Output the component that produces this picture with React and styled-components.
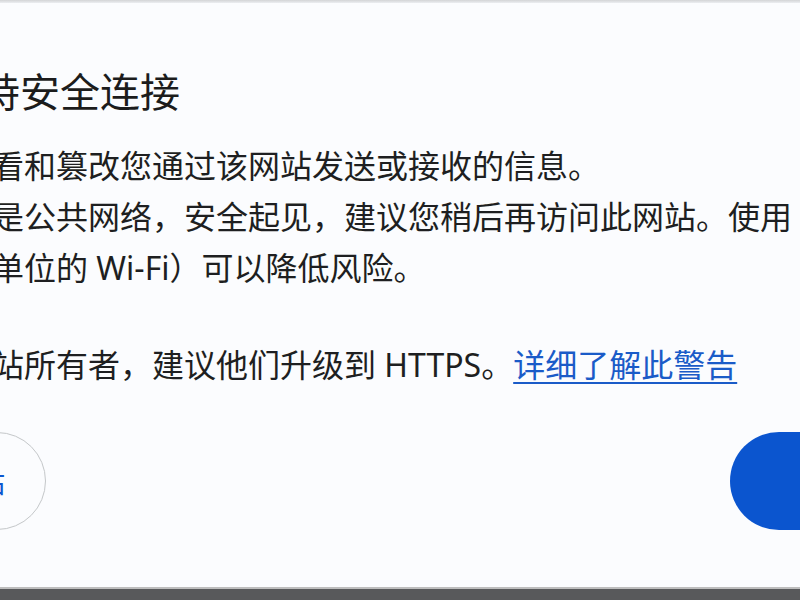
import React from "react";
import styled, { createGlobalStyle } from "styled-components";

const GlobalStyle = createGlobalStyle`
  html, body {
    margin: 0;
    padding: 0;
    background: #fbfcfe;
    overflow: hidden;
  }
  * { box-sizing: border-box; }
`;

const Screen = styled.div`
  width: 800px;
  height: 600px;
  display: flex;
  flex-direction: column;
  overflow: hidden;
  background: #fbfcfe;
  font-family: "Noto Sans", "Noto Sans CJK SC", sans-serif;
  color: #1e1f21;
`;

const TopEdge = styled.div`
  flex: 0 0 3px;
  background: linear-gradient(#d3d4d6, #eceef1);
`;

const Main = styled.main`
  flex: 1;
  min-height: 0;
  overflow: hidden;
  padding-top: 62px;
`;

const Column = styled.div`
  width: 1130px;
  margin-left: -200px;
`;

const Heading = styled.h1`
  margin: 0 0 25px -20px;
  font-family: "Noto Sans CJK SC", sans-serif;
  font-size: 40px;
  line-height: 50px;
  font-weight: 400;
  white-space: nowrap;
  color: #1c1c1c;
`;

const Para = styled.p`
  margin: 0 0 ${(p) => p.$after || 0}px;
  font-size: 32px;
  line-height: 51px;
`;

const Line = styled.span`
  display: block;
  white-space: nowrap;
`;

const Link = styled.a`
  color: #1a5bc8;
  text-decoration: underline;
  text-decoration-thickness: 1.5px;
  text-underline-offset: 5px;
  cursor: pointer;
`;

const ButtonRow = styled.div`
  margin: 42px 0 0 -4px;
  display: flex;
  align-items: center;
  justify-content: space-between;
`;

const PillButton = styled.button`
  height: 98px;
  border-radius: 49px;
  font-family: "Noto Sans CJK SC", sans-serif;
  font-size: 28px;
  white-space: nowrap;
  cursor: pointer;
  padding: 0 ${(p) => (p.$primary ? 72 : 40)}px;
  border: ${(p) => (p.$primary ? "none" : "1.5px solid #c4c7c9")};
  background: ${(p) => (p.$primary ? "#0b55cf" : "transparent")};
  color: ${(p) => (p.$primary ? "#ffffff" : "#0b57d0")};
`;

const BottomBar = styled.div`
  flex: 0 0 13px;
  border-top: 2px solid #bdbdbd;
  background: #58595b;
`;

export default function App() {
  return (
    <>
      <GlobalStyle />
      <Screen>
        <TopEdge />
        <Main>
          <Column>
            <Heading>此网站不支持安全连接</Heading>
            <Para>
              <Line>攻击者可以查看和篡改您通过该网站发送或接收的信息。</Line>
            </Para>
            <Para $after={46}>
              <Line>如果您使用的是公共网络，安全起见，建议您稍后再访问此网站。使用</Line>
              <Line>如家庭或工作单位的 Wi-Fi）可以降低风险。</Line>
            </Para>
            <Para>
              <Line>
                您可以联系网站所有者，建议他们升级到 HTTPS。<Link>详细了解此警告</Link>
              </Line>
            </Para>
            <ButtonRow>
              <PillButton>继续访问网站</PillButton>
              <PillButton $primary>返回</PillButton>
            </ButtonRow>
          </Column>
        </Main>
        <BottomBar />
      </Screen>
    </>
  );
}
